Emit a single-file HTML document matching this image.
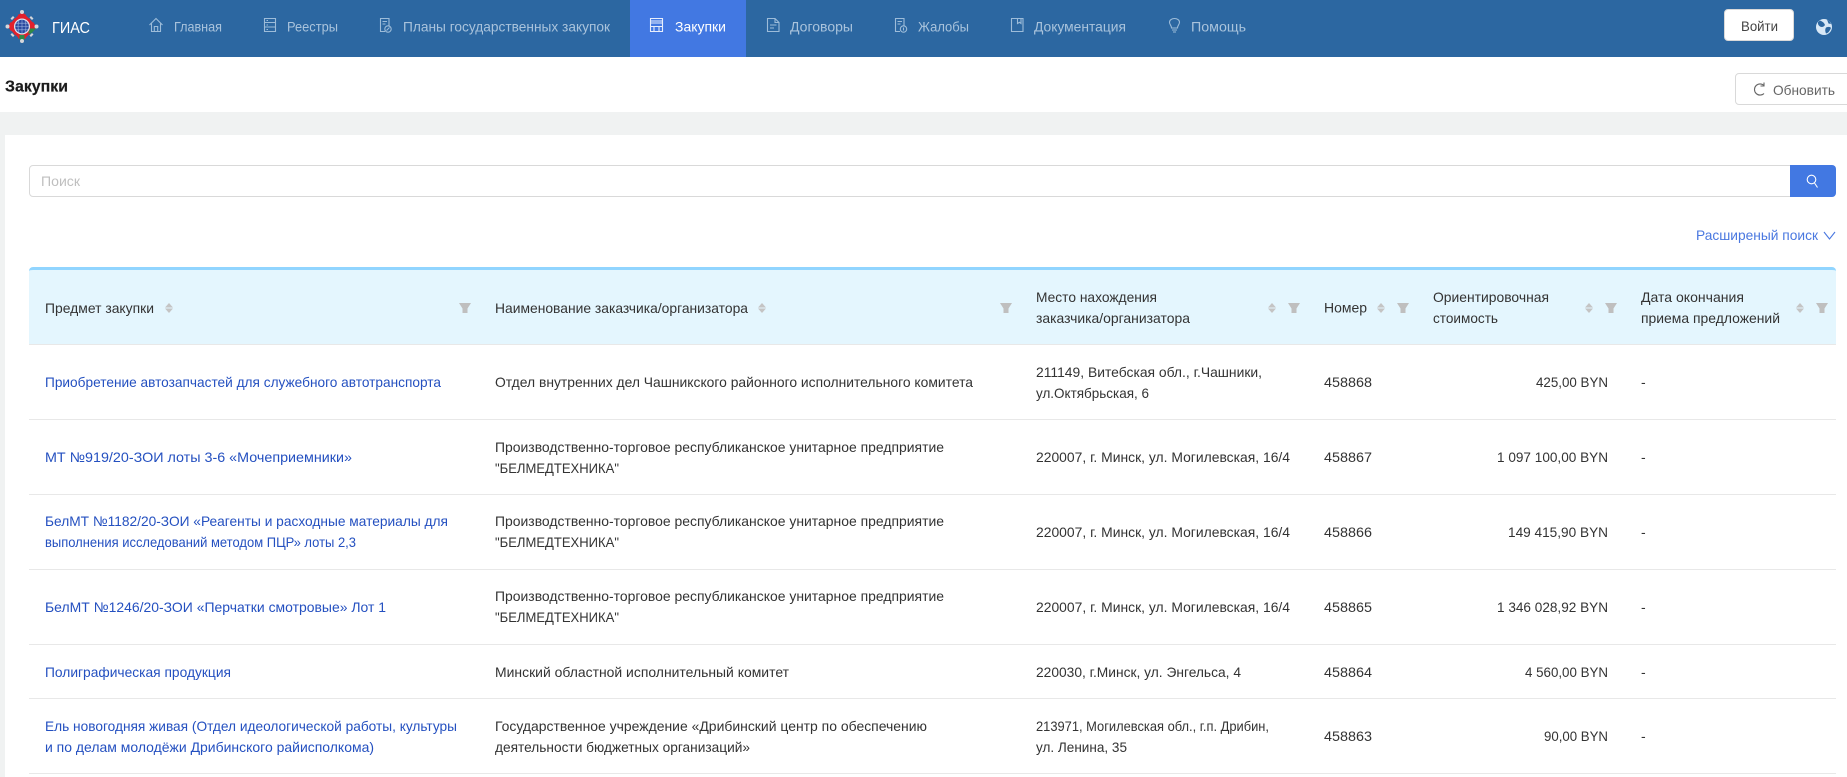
<!DOCTYPE html>
<html lang="ru"><head><meta charset="utf-8"><title>Закупки</title>
<style>
html,body{margin:0;padding:0;width:1847px;height:777px;overflow:hidden;background:#fff}
body{position:relative;font-family:"Liberation Sans","Noto Sans CJK SC",sans-serif}
.a{position:absolute;box-sizing:border-box}
svg{position:absolute;left:0;top:0}
text{font-size:14px;fill:#333}
.n{fill:#a9c3dc}
.l{fill:#2450c0}
.i{fill:none;stroke:#9dbcd9;stroke-width:1.1}
.f{fill:#bfbfbf}
.s{fill:#c4c4c4}
.r{background:#e8e8e8;height:1px;left:29px;width:1807px}
</style></head><body>
<div class="a" style="left:0;top:0;width:1847px;height:57px;background:#2c67a1"></div>
<div class="a" style="left:630px;top:0;width:116px;height:57px;background:#4278e2"></div>
<div class="a" style="left:1724px;top:9px;width:70px;height:32px;background:#fff;border:1px solid #d9d9d9;border-radius:4px"></div>
<div class="a" style="left:0;top:112px;width:1847px;height:23px;background:#f0f2f2"></div>
<div class="a" style="left:0;top:112px;width:5px;height:665px;background:#f0f2f2"></div>
<div class="a" style="left:1735px;top:73px;width:120px;height:32px;background:#fff;border:1px solid #d9d9d9;border-radius:4px"></div>
<div class="a" style="left:29px;top:165px;width:1762px;height:32px;background:#fff;border:1px solid #d9d9d9;border-radius:4px 0 0 4px"></div>
<div class="a" style="left:1790px;top:165px;width:46px;height:32px;background:#4278e2;border-radius:0 4px 4px 0"></div>
<div class="a" style="left:29px;top:267px;width:1807px;height:78px;background:#e4f6fe;border-top:3px solid #91d5ff;border-bottom:1px solid #e8e8e8;border-radius:4px 4px 0 0"></div>
<div class="a r" style="top:419px"></div><div class="a r" style="top:494px"></div><div class="a r" style="top:569px"></div><div class="a r" style="top:644px"></div><div class="a r" style="top:698px"></div><div class="a r" style="top:773px"></div>

<svg width="1847" height="777" viewBox="0 0 1847 777" xmlns="http://www.w3.org/2000/svg">
<defs>
<g id="so"><path class="s" d="M4 0L8 4.500H0Z"/><path class="s" d="M0 5.500H8L4 10Z"/></g>
<g id="fi"><path class="f" d="M0 0H12L8.500 5.500V10H3.500V5.500Z"/></g>
</defs>
<!-- logo -->
<g transform="translate(22 26.500)">
<path d="M0-12L4-12 4-8 8-8 8-4 12-4 12 4 8 4 8 8 4 8 4 12-4 12-4 8-8 8-8 4-12 4-12-4-8-4-8-8-4-8-4-12Z" fill="#e2202c" transform="rotate(0)"/>
<path d="M0-13.500L13.500 0 0 13.500-13.500 0Z" fill="none" stroke="#e2202c" stroke-width="2"/>
<path d="M8 2H14L9 7 6 7ZM-2.500 8.500H2.500V13L0 15-2.500 13Z" fill="#2f8a46"/>
<g fill="#d6d6da"><circle cy="-14.500" r="2"/><circle cy="14.500" r="2"/><circle cx="-14.500" r="2"/><circle cx="14.500" r="2"/><path d="M-11.500-8L-9-10.500-7.500-9-10-6.500ZM11.500-8L9-10.500 7.500-9 10-6.500ZM-11.500 8L-9 10.500-7.500 9-10 6.500ZM11.500 8L9 10.500 7.500 9 10 6.500Z"/></g>
<circle r="8" fill="#dfe4ee"/>
<circle r="6.800" fill="#2a4aa0"/><path d="M-6.800 0H6.800M-6 -3.300H6M-6 3.300H6M0-6.800V6.800M-3-6Q-5 0-3 6M3-6Q5 0 3 6" stroke="#9db6e0" stroke-width=".6" fill="none"/>
</g>
<text x="52" y="33" textLength="38" lengthAdjust="spacingAndGlyphs" style="font-size:16px;fill:#fff">ГИАС</text>

<!-- nav icons -->
<path class="i" d="M149.500 25L156 18.500 162.500 25M151.500 23.500V31.500H160.500V23.500M154.300 31.500V26.500H157.700V31.500"/>
<path class="i" d="M264.500 18.500H275.500V31.500H264.500ZM264.500 22.500H275.500M264.500 27H275.500M266.500 20.500H268M266.500 25H268M266.500 29.500H268"/>
<path class="i" d="M389 26V18.500H380.500V31.500H385M382.500 21.500H387M382.500 24H385.500"/><circle class="i" cx="388" cy="29" r="3.200"/><path class="i" d="M386.500 30.500L389.500 27.500"/>
<path d="M650.500 18.500H662.500V31.500H650.500ZM650.500 23H662.500M650.500 26.500H662.500M654 26.500V31.500M659 26.500V31.500M651 21H662" fill="none" stroke="#e8eefc" stroke-width="1.100"/>
<path class="i" d="M767.500 18.500H775L779 22.500V31.500H767.500ZM775 18.500V22.500H779M770 25H776.500M770 28H774"/>
<path class="i" d="M904 26V18.500H895.500V31.500H900M897.500 21.500H902M897.500 24H900.500"/><circle class="i" cx="903.500" cy="29" r="3.200"/><path class="i" d="M903.500 27.500V30.500"/>
<path class="i" d="M1011.500 18.500H1023V31.500H1011.500ZM1017.500 18.500V23.500L1019.500 22.300 1021 23.500V18.500"/>
<path class="i" d="M1171.500 28C1171.500 25.500 1169.500 24.500 1169.500 22.300 1169.500 20 1171.800 18.500 1174.500 18.500S1179.500 20 1179.500 22.300C1179.500 24.500 1177.500 25.500 1177.500 28ZM1172 30H1177M1173 32H1176"/>

<!-- nav text -->
<text class="n" x="174" y="31.500" textLength="48" lengthAdjust="spacingAndGlyphs">Главная</text>
<text class="n" x="287" y="31.500" textLength="51" lengthAdjust="spacingAndGlyphs">Реестры</text>
<text class="n" x="403" y="31.500" textLength="207" lengthAdjust="spacingAndGlyphs">Планы государственных закупок</text>
<text x="675" y="31.500" textLength="51" lengthAdjust="spacingAndGlyphs" style="fill:#fff">Закупки</text>
<text class="n" x="790" y="31.500" textLength="63" lengthAdjust="spacingAndGlyphs">Договоры</text>
<text class="n" x="918" y="31.500" textLength="51" lengthAdjust="spacingAndGlyphs">Жалобы</text>
<text class="n" x="1034" y="31.500" textLength="92" lengthAdjust="spacingAndGlyphs">Документация</text>
<text class="n" x="1191" y="31.500" textLength="55" lengthAdjust="spacingAndGlyphs">Помощь</text>

<text x="1741" y="31" textLength="37" lengthAdjust="spacingAndGlyphs" style="fill:#444">Войти</text>
<circle cx="1824" cy="27" r="8" fill="#d8e8f6"/>
<path d="M1820 20.500Q1824 22 1825 25 1823 28 1820 26.500 1817.500 25 1818 22ZM1826 27.500Q1830 26 1831 28 1829 33 1826 33.500 1824.500 30 1826 27.500ZM1827 19.500Q1830 21 1831 24L1828.500 23.500Z" fill="#2c67a1"/>

<text x="5" y="91.500" textLength="63" lengthAdjust="spacingAndGlyphs" style="font-size:16px;font-weight:bold;fill:#1c1c1c;stroke:#1c1c1c;stroke-width:.2">Закупки</text>
<path d="M1764 85.500A5.600 5.600 0 1 0 1764 93.500M1764 82.500V86H1760.500" fill="none" stroke="#666" stroke-width="1.100"/>
<text x="1773" y="95" textLength="62" lengthAdjust="spacingAndGlyphs" style="fill:#666">Обновить</text>

<text x="41" y="186" textLength="39" lengthAdjust="spacingAndGlyphs" style="fill:#bfbfbf">Поиск</text>
<circle cx="1811.500" cy="179.500" r="4.300" fill="none" stroke="#fff" stroke-width="1.100"/><path d="M1814.500 183L1817.500 187.500" stroke="#fff" stroke-width="1.100"/>

<text x="1696" y="240" textLength="122" lengthAdjust="spacingAndGlyphs" style="fill:#4a78e0">Расширеный поиск</text>
<path d="M1824 232L1829.500 239 1835 232" fill="none" stroke="#4a78e0" stroke-width="1.100"/>

<!-- table head -->
<text x="45" y="313" textLength="109" lengthAdjust="spacingAndGlyphs">Предмет закупки</text>
<use href="#so" x="165" y="303"/><use href="#fi" x="459" y="303"/>
<text x="495" y="313" textLength="253" lengthAdjust="spacingAndGlyphs">Наименование заказчика/организатора</text>
<use href="#so" x="758" y="303"/><use href="#fi" x="1000" y="303"/>
<text x="1036" y="302" textLength="121" lengthAdjust="spacingAndGlyphs">Место нахождения</text>
<text x="1036" y="323" textLength="154" lengthAdjust="spacingAndGlyphs">заказчика/организатора</text>
<use href="#so" x="1268" y="303"/><use href="#fi" x="1288" y="303"/>
<text x="1324" y="312.500" textLength="43" lengthAdjust="spacingAndGlyphs">Номер</text>
<use href="#so" x="1377" y="303"/><use href="#fi" x="1397" y="303"/>
<text x="1433" y="302" textLength="116" lengthAdjust="spacingAndGlyphs">Ориентировочная</text>
<text x="1433" y="323" textLength="65" lengthAdjust="spacingAndGlyphs">стоимость</text>
<use href="#so" x="1585" y="303"/><use href="#fi" x="1605" y="303"/>
<text x="1641" y="302" textLength="103" lengthAdjust="spacingAndGlyphs">Дата окончания</text>
<text x="1641" y="323" textLength="139" lengthAdjust="spacingAndGlyphs">приема предложений</text>
<use href="#so" x="1796" y="303"/><use href="#fi" x="1816" y="303"/>

<!-- row 1 -->
<text class="l" x="45" y="387" textLength="396" lengthAdjust="spacingAndGlyphs">Приобретение автозапчастей для служебного автотранспорта</text>
<text x="495" y="387" textLength="478" lengthAdjust="spacingAndGlyphs">Отдел внутренних дел Чашникского районного исполнительного комитета</text>
<text x="1036" y="377" textLength="226" lengthAdjust="spacingAndGlyphs">211149, Витебская обл., г.Чашники,</text>
<text x="1036" y="398" textLength="113" lengthAdjust="spacingAndGlyphs">ул.Октябрьская, 6</text>
<text x="1324" y="387" textLength="48" lengthAdjust="spacingAndGlyphs">458868</text>
<text x="1536" y="387" textLength="72" lengthAdjust="spacingAndGlyphs">425,00 BYN</text>
<text x="1641" y="387">-</text>
<!-- row 2 -->
<text class="l" x="45" y="462" textLength="307" lengthAdjust="spacingAndGlyphs">МТ №919/20-ЗОИ лоты 3-6 «Мочеприемники»</text>
<text x="495" y="452" textLength="449" lengthAdjust="spacingAndGlyphs">Производственно-торговое республиканское унитарное предприятие</text>
<text x="495" y="473" textLength="124" lengthAdjust="spacingAndGlyphs">"БЕЛМЕДТЕХНИКА"</text>
<text x="1036" y="462" textLength="254" lengthAdjust="spacingAndGlyphs">220007, г. Минск, ул. Могилевская, 16/4</text>
<text x="1324" y="462" textLength="48" lengthAdjust="spacingAndGlyphs">458867</text>
<text x="1497" y="462" textLength="111" lengthAdjust="spacingAndGlyphs">1 097 100,00 BYN</text>
<text x="1641" y="462">-</text>
<!-- row 3 -->
<text class="l" x="45" y="526" textLength="403" lengthAdjust="spacingAndGlyphs">БелМТ №1182/20-ЗОИ «Реагенты и расходные материалы для</text>
<text class="l" x="45" y="547" textLength="311" lengthAdjust="spacingAndGlyphs">выполнения исследований методом ПЦР» лоты 2,3</text>
<text x="495" y="526" textLength="449" lengthAdjust="spacingAndGlyphs">Производственно-торговое республиканское унитарное предприятие</text>
<text x="495" y="547" textLength="124" lengthAdjust="spacingAndGlyphs">"БЕЛМЕДТЕХНИКА"</text>
<text x="1036" y="537" textLength="254" lengthAdjust="spacingAndGlyphs">220007, г. Минск, ул. Могилевская, 16/4</text>
<text x="1324" y="537" textLength="48" lengthAdjust="spacingAndGlyphs">458866</text>
<text x="1508" y="537" textLength="100" lengthAdjust="spacingAndGlyphs">149 415,90 BYN</text>
<text x="1641" y="537">-</text>
<!-- row 4 -->
<text class="l" x="45" y="612" textLength="341" lengthAdjust="spacingAndGlyphs">БелМТ №1246/20-ЗОИ «Перчатки смотровые» Лот 1</text>
<text x="495" y="601" textLength="449" lengthAdjust="spacingAndGlyphs">Производственно-торговое республиканское унитарное предприятие</text>
<text x="495" y="622" textLength="124" lengthAdjust="spacingAndGlyphs">"БЕЛМЕДТЕХНИКА"</text>
<text x="1036" y="612" textLength="254" lengthAdjust="spacingAndGlyphs">220007, г. Минск, ул. Могилевская, 16/4</text>
<text x="1324" y="612" textLength="48" lengthAdjust="spacingAndGlyphs">458865</text>
<text x="1497" y="612" textLength="111" lengthAdjust="spacingAndGlyphs">1 346 028,92 BYN</text>
<text x="1641" y="612">-</text>
<!-- row 5 -->
<text class="l" x="45" y="677" textLength="186" lengthAdjust="spacingAndGlyphs">Полиграфическая продукция</text>
<text x="495" y="677" textLength="294" lengthAdjust="spacingAndGlyphs">Минский областной исполнительный комитет</text>
<text x="1036" y="677" textLength="205" lengthAdjust="spacingAndGlyphs">220030, г.Минск, ул. Энгельса, 4</text>
<text x="1324" y="677" textLength="48" lengthAdjust="spacingAndGlyphs">458864</text>
<text x="1525" y="677" textLength="83" lengthAdjust="spacingAndGlyphs">4 560,00 BYN</text>
<text x="1641" y="677">-</text>
<!-- row 6 -->
<text class="l" x="45" y="731" textLength="412" lengthAdjust="spacingAndGlyphs">Ель новогодняя живая (Отдел идеологической работы, культуры</text>
<text class="l" x="45" y="752" textLength="329" lengthAdjust="spacingAndGlyphs">и по делам молодёжи Дрибинского райисполкома)</text>
<text x="495" y="731" textLength="432" lengthAdjust="spacingAndGlyphs">Государственное учреждение «Дрибинский центр по обеспечению</text>
<text x="495" y="752" textLength="255" lengthAdjust="spacingAndGlyphs">деятельности бюджетных организаций»</text>
<text x="1036" y="731" textLength="233" lengthAdjust="spacingAndGlyphs">213971, Могилевская обл., г.п. Дрибин,</text>
<text x="1036" y="752" textLength="91" lengthAdjust="spacingAndGlyphs">ул. Ленина, 35</text>
<text x="1324" y="741" textLength="48" lengthAdjust="spacingAndGlyphs">458863</text>
<text x="1544" y="741" textLength="64" lengthAdjust="spacingAndGlyphs">90,00 BYN</text>
<text x="1641" y="741">-</text>
</svg>
</body></html>
